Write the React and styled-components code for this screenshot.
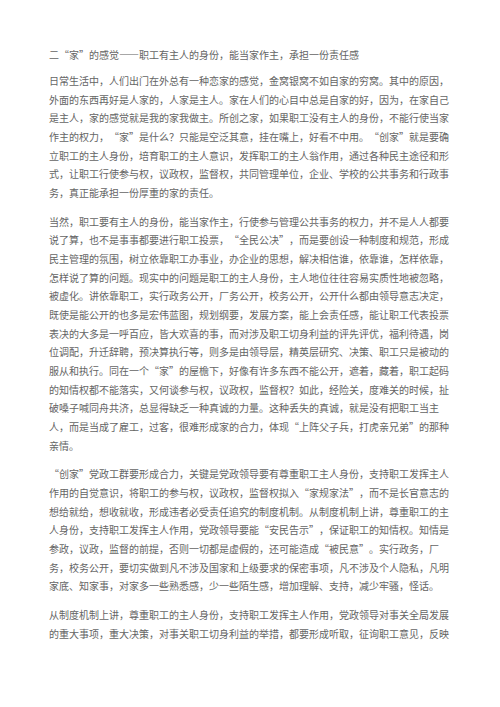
import styled, { createGlobalStyle } from "styled-components"

const GlobalStyle = createGlobalStyle`
  html, body {
    margin: 0;
    padding: 0;
    background: #fff;
  }
`

const paragraphs = [
  "日常生活中，人们出门在外总有一种恋家的感觉，金窝银窝不如自家的穷窝。其中的原因，外面的东西再好是人家的，人家是主人。家在人们的心目中总是自家的好，因为，在家自己是主人，家的感觉就是我的家我做主。所创之家，如果职工没有主人的身份，不能行使当家作主的权力，“家”是什么？只能是空泛其意，挂在嘴上，好看不中用。“创家”就是要确立职工的主人身份，培育职工的主人意识，发挥职工的主人翁作用，通过各种民主途径和形式，让职工行使参与权，议政权，监督权，共同管理单位，企业、学校的公共事务和行政事务，真正能承担一份厚重的家的责任。",
  "当然，职工要有主人的身份，能当家作主，行使参与管理公共事务的权力，并不是人人都要说了算，也不是事事都要进行职工投票，“全民公决”，而是要创设一种制度和规范，形成民主管理的氛围，树立依靠职工办事业，办企业的思想，解决相信谁，依靠谁，怎样依靠，怎样说了算的问题。现实中的问题是职工的主人身份，主人地位往往容易实质性地被忽略，被虚化。讲依靠职工，实行政务公开，厂务公开，校务公开，公开什么都由领导意志决定，既使是能公开的也多是宏伟蓝图，规划纲要，发展方案，能上会责任感，能让职工代表投票表决的大多是一呼百应，皆大欢喜的事，而对涉及职工切身利益的评先评优，福利待遇，岗位调配，升迁辞聘，预决算执行等，则多是由领导层，精英层研究、决策、职工只是被动的服从和执行。同在一个“家”的屋檐下，好像有许多东西不能公开，遮着，藏着，职工起码的知情权都不能落实，又何谈参与权，议政权，监督权？如此，经险关，度难关的时候，扯破嗓子喊同舟共济，总显得缺乏一种真诚的力量。这种丢失的真诚，就是没有把职工当主人，而是当成了雇工，过客，很难形成家的合力，体现“上阵父子兵，打虎亲兄弟”的那种亲情。",
  "“创家”党政工群要形成合力，关键是党政领导要有尊重职工主人身份，支持职工发挥主人作用的自觉意识，将职工的参与权，议政权，监督权拟入“家规家法”，而不是长官意志的想给就给，想收就收，形成违者必受责任追究的制度机制。从制度机制上讲，尊重职工的主人身份，支持职工发挥主人作用，党政领导要能“安民告示”，保证职工的知情权。知情是参政，议政，监督的前提，否则一切都是虚假的，还可能造成“被民意”。实行政务，厂务，校务公开，要切实做到凡不涉及国家和上级要求的保密事项，凡不涉及个人隐私，凡明家底、知家事，对家多一些熟悉感，少一些陌生感，增加理解、支持，减少牢骚，怪话。",
  "从制度机制上讲，尊重职工的主人身份，支持职工发挥主人作用，党政领导对事关全局发展的重大事项，重大决策，对事关职工切身利益的举措，都要形成听取，征询职工意见，反映",
]

const Page = () => {
  return (
    <Wrapper>
      <GlobalStyle />
      <Sheet lang="zh-CN">
        <Heading>二“家”的感觉——职工有主人的身份，能当家作主，承担一份责任感</Heading>
        {paragraphs.map((text, i) => (
          <Para key={i}>{text}</Para>
        ))}
      </Sheet>
    </Wrapper>
  )
}

const Wrapper = styled.main`
  width: 500px;
  height: 707px;
  overflow: hidden;
  background: #fff;
`

const Sheet = styled.article`
  width: 402px;
  padding: 46px 0 0 49px;
  font-family: "Noto Sans CJK SC", "Noto Sans CJK TC", sans-serif;
  font-size: 10px;
  line-height: 18.65px;
  color: #646464;
  font-variant-east-asian: full-width;
  text-spacing-trim: space-all;
`

const Heading = styled.h2`
  margin: 0 0 7.5px 0;
  font-size: 10px;
  font-weight: 400;
  line-height: 18.65px;
`

const Para = styled.p`
  margin: 0 0 10px 0;
  text-align: left;
`

export default Page
